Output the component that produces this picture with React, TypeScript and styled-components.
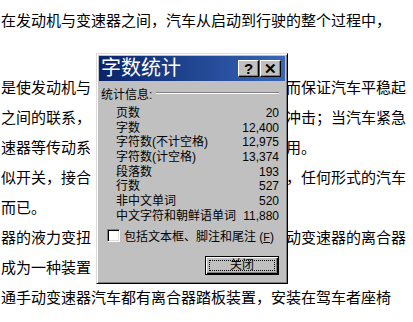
import React from 'react';
import styled, { createGlobalStyle } from 'styled-components';

const GlobalStyle = createGlobalStyle`
    html, body {
        margin: 0;
        padding: 0;
        background: #ffffff;
    }
    body {
        font-family: "Noto Sans CJK SC", "Noto Sans", sans-serif;
    }
`;

const Page = styled.div`
    position: relative;
    width: 413px;
    height: 322px;
    overflow: hidden;
    background: #ffffff;
    padding-top: 5px;
    box-sizing: border-box;
`;

const Para = styled.p<{ $after?: number }>`
    margin: 0 0 ${p => p.$after || 0}px 0;
    padding-left: 1px;
    font-size: 15px;
    line-height: 30px;
    white-space: nowrap;
    color: #000000;
`;

// the part of a line that sits under the dialog
const Covered = styled.span`
    display: inline-block;
    width: 195px;
`;

const Dialog = styled.div`
    position: absolute;
    left: 96px;
    top: 53px;
    width: 192px;
    height: 231px;
    box-sizing: border-box;
    background: #c0c0c0;
    border-top: 1px solid #dcdcdc;
    border-left: 1px solid #dcdcdc;
    border-right: 1px solid #000000;
    border-bottom: 1px solid #000000;
    box-shadow: inset 1px 1px 0 #ffffff, inset -1px -1px 0 #808080;
    padding: 2px;
    display: flex;
    flex-direction: column;
    font-family: "Liberation Sans", "Noto Sans CJK SC", sans-serif;
    font-size: 12px;
    color: #000000;
`;

const TitleBar = styled.div`
    height: 25px;
    background: linear-gradient(to right, #0a246a, #3766b8);
    display: flex;
    align-items: center;
    justify-content: space-between;
    padding: 0 4px 0 2px;
`;

const Title = styled.span`
    color: #ffffff;
    font-size: 20px;
    line-height: 25px;
`;

const TitleButtons = styled.div`
    display: flex;
    gap: 1px;
`;

const CapButton = styled.div`
    width: 21px;
    height: 17px;
    box-sizing: border-box;
    background: #c0c0c0;
    border-top: 1px solid #ffffff;
    border-left: 1px solid #ffffff;
    border-right: 1px solid #000000;
    border-bottom: 1px solid #000000;
    box-shadow: inset -1px -1px 0 #808080;
    display: flex;
    align-items: center;
    justify-content: center;
    font-family: "Liberation Sans", sans-serif;
    font-weight: bold;
    font-size: 15px;
    line-height: 1;
`;

const Body = styled.div`
    flex: 1;
    display: flex;
    flex-direction: column;
    padding: 4px 6px 0 2px;
`;

const GroupHead = styled.div`
    display: flex;
    align-items: center;
    gap: 4px;
    height: 16px;
`;

const Etched = styled.div`
    flex: 1;
    height: 0;
    border-top: 1px solid #808080;
    border-bottom: 1px solid #ffffff;
`;

const Stats = styled.div`
    margin-top: 5px;
    padding-left: 15px;
    display: flex;
    flex-direction: column;
`;

const StatRow = styled.div`
    display: flex;
    justify-content: space-between;
    height: 14.7px;
    line-height: 14.7px;
    white-space: nowrap;
`;

const CheckRow = styled.div`
    display: flex;
    align-items: center;
    gap: 4px;
    margin-top: 3px;
    padding-left: 6px;
`;

const CheckBox = styled.div`
    width: 13px;
    height: 13px;
    box-sizing: border-box;
    background: #ffffff;
    border-top: 1px solid #808080;
    border-left: 1px solid #808080;
    border-right: 1px solid #ffffff;
    border-bottom: 1px solid #ffffff;
    box-shadow: inset 1px 1px 0 #000000, inset -1px -1px 0 #dcdcdc;
`;

const Key = styled.span`
    font-size: 11px;
    text-decoration: underline;
`;

const Footer = styled.div`
    display: flex;
    justify-content: flex-end;
    margin-top: 12px;
`;

const DefaultButton = styled.div`
    width: 74px;
    height: 19px;
    box-sizing: border-box;
    border: 1px solid #000000;
    background: #c0c0c0;
    box-shadow: inset 1px 1px 0 #ffffff, inset -1px -1px 0 #000000, inset -2px -2px 0 #808080;
    padding: 3px;
    display: flex;
`;

const Focus = styled.div`
    flex: 1;
    border: 1px dotted #000000;
    display: flex;
    align-items: center;
    justify-content: center;
    font-size: 12px;
    line-height: 1;
`;

const stats: [string, string][] = [
    ['页数', '20'],
    ['字数', '12,400'],
    ['字符数(不计空格)', '12,975'],
    ['字符数(计空格)', '13,374'],
    ['段落数', '193'],
    ['行数', '527'],
    ['非中文单词', '520'],
    ['中文字符和朝鲜语单词', '11,880'],
];

// [left of the dialog, right of the dialog]
const lines: [string, string?][] = [
    ['在发动机与变速器之间，汽车从启动到行驶的整个过程中，'],
    ['是使发动机与', '而保证汽车平稳起'],
    ['之间的联系，', '冲击；当汽车紧急'],
    ['速器等传动系', '用。'],
    ['似开关，接合', '，任何形式的汽车'],
    ['而已。'],
    ['器的液力变扭', '动变速器的离合器'],
    ['成为一种装置'],
    ['通手动变速器汽车都有离合器踏板装置，安装在驾车者座椅'],
];

export default function App() {
    return (
        <>
            <GlobalStyle />
            <Page>
                {lines.map(([left, right], i) => (
                    <Para key={i} $after={i === 0 ? 37 : 0}>
                        {left}
                        {right && <Covered />}
                        {right}
                    </Para>
                ))}
                <Dialog>
                    <TitleBar>
                        <Title>字数统计</Title>
                        <TitleButtons>
                            <CapButton>?</CapButton>
                            <CapButton>✕</CapButton>
                        </TitleButtons>
                    </TitleBar>
                    <Body>
                        <GroupHead>
                            <span>统计信息:</span>
                            <Etched />
                        </GroupHead>
                        <Stats>
                            {stats.map(([label, value]) => (
                                <StatRow key={label}>
                                    <span>{label}</span>
                                    <span>{value}</span>
                                </StatRow>
                            ))}
                        </Stats>
                        <CheckRow>
                            <CheckBox />
                            <span>包括文本框、脚注和尾注 (<Key>F</Key>)</span>
                        </CheckRow>
                        <Footer>
                            <DefaultButton>
                                <Focus>关闭</Focus>
                            </DefaultButton>
                        </Footer>
                    </Body>
                </Dialog>
            </Page>
        </>
    );
}
